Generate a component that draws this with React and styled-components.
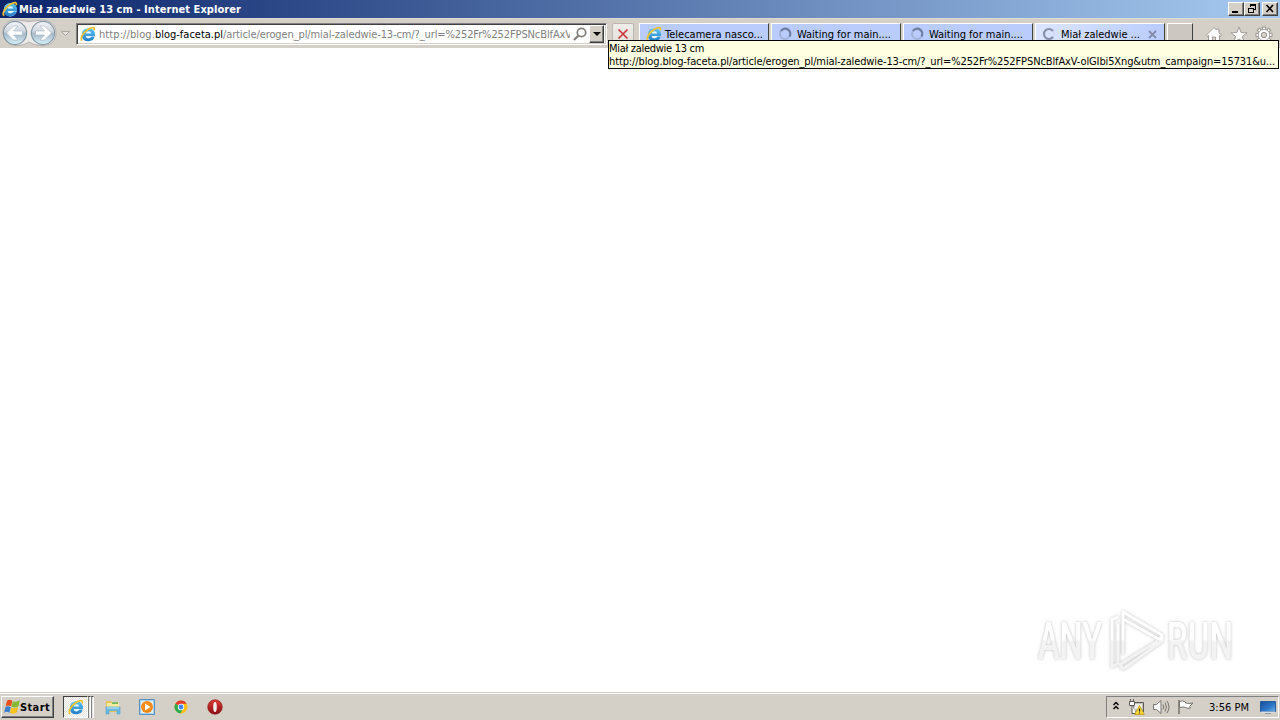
import React, { useLayoutEffect, useRef } from "react";
import styled, { createGlobalStyle, css } from "styled-components";

const Global = createGlobalStyle`
  * { box-sizing: border-box; }
  body { margin: 0; background: #fff; overflow: hidden; }
`;

const Desktop = styled.div`
  width: 1280px;
  height: 720px;
  display: flex;
  flex-direction: column;
  background: #fff;
  color: #000;
  font: 11px/13px "DejaVu Sans Condensed", "DejaVu Sans", sans-serif;
  position: relative;
  overflow: hidden;
  cursor: default;
`;

const Label = styled.span`
  display: inline-block;
  white-space: pre;
  flex: none;
  color: ${(p) => p.$color || "inherit"};
  font-weight: ${(p) => (p.$bold ? 700 : 400)};
`;

/* Tracks the glyphs so that the label takes exactly the given width. */
function Text({ width, color, bold, children }) {
  const ref = useRef(null);
  useLayoutEffect(() => {
    const el = ref.current;
    el.style.letterSpacing = "0px";
    const natural = el.getBoundingClientRect().width;
    el.style.letterSpacing = `${(width - natural) / el.textContent.length}px`;
  }, [width, children]);
  return (
    <Label ref={ref} $color={color} $bold={bold}>
      {children}
    </Label>
  );
}

const TitleBar = styled.header`
  height: 18px;
  flex: none;
  display: flex;
  align-items: center;
  padding: 0 2px 0 2px;
  gap: 1px;
  color: #fff;
  background: linear-gradient(90deg, #0a246a, #a6caf0);
`;

const WindowButtons = styled.div`
  display: flex;
  margin-left: auto;
`;

const raised = css`
  background: #d4d0c8;
  border: 1px solid;
  border-color: #fff #404040 #404040 #fff;
  box-shadow: inset -1px -1px #808080;
`;

const WindowButton = styled.span`
  ${raised}
  width: 16px;
  height: 14px;
  display: flex;
  margin-left: ${(p) => (p.$apart ? "2px" : 0)};
  svg { display: block; }
`;

const ToolBar = styled.nav`
  height: 30px;
  flex: none;
  display: flex;
  align-items: flex-start;
  background: #d4d0c8;
  border-top: 1px solid #dedad4;
`;

const NavButtons = styled.div`
  width: 76px;
  height: 28px;
  svg { display: block; }
`;

const AddressBar = styled.div`
  width: 531px;
  height: 22px;
  margin-top: 4px;
  display: flex;
  align-items: center;
  background: #fff;
  border: 1px solid;
  border-color: #808080 #fff #fff #808080;
  box-shadow: inset 1px 1px #404040, inset -1px -1px #d4d0c8;
  padding: 0 2px 1px 3px;
`;

const UrlText = styled.div`
  width: 472px;
  margin-left: 3px;
  padding-top: 1px;
  display: flex;
  overflow: hidden;
`;

const SearchSlot = styled.span`
  width: 19px;
  display: flex;
  justify-content: center;
`;

const DropButton = styled.span`
  ${raised}
  width: 15px;
  height: 18px;
  margin-top: 1px;
  display: flex;
  align-items: center;
  justify-content: center;
`;

const StopButton = styled.span`
  width: 22px;
  height: 22px;
  margin: 4px 5px 0 5px;
  border: 1px solid #bcb8b1;
  border-radius: 2px;
  background: linear-gradient(#f0edeb, #e2deda);
  display: flex;
  align-items: center;
  justify-content: center;
`;

const Tabs = styled.div`
  display: flex;
  gap: 2px;
  margin-top: 4px;
`;

const Tab = styled.div`
  width: 130px;
  height: 23px;
  display: flex;
  align-items: center;
  padding: 0 0 2px 6px;
  background: ${(p) => (p.$active ? "linear-gradient(90deg, #dbe5ff, #b9ccfb)" : "#b9ccfb")};
  border: 1px solid #fff;
  border-right: 1px solid #404040;
  border-bottom: 0;
  svg { flex: none; }
`;

const TabText = styled.span`
  margin-left: ${(p) => p.$gap}px;
  margin-right: 8px;
  padding-top: 1px;
`;

const NewTab = styled.div`
  width: 26px;
  height: 23px;
  background: #ccc8c1;
  border-top: 1px solid #fff;
  border-left: 1px solid #fff;
  border-right: 1px solid #404040;
`;

const Commands = styled.div`
  display: flex;
  gap: 7px;
  margin: 7px 7px 0 auto;
`;

const Tooltip = styled.div`
  position: absolute;
  left: 608px;
  top: 40px;
  width: 671px;
  height: 29px;
  padding: 1px 0 0;
  background: #ffffe1;
  border: 1px solid #000;
  display: flex;
  flex-direction: column;
  align-items: flex-start;
`;

const Page = styled.main`
  flex: 1;
`;

const Watermark = styled.svg`
  position: absolute;
  left: 1025px;
  top: 600px;
  filter: drop-shadow(0 0 1.5px rgba(0, 0, 0, 0.25));
`;

const TaskBar = styled.footer`
  height: 28px;
  flex: none;
  display: flex;
  align-items: center;
  background: #d4d0c8;
  border-top: 1px solid #d4d0c8;
  box-shadow: inset 0 1px #fff;
  padding: 1px 0 0 1px;
`;

const StartButton = styled.div`
  ${raised}
  width: 53px;
  height: 22px;
  display: flex;
  align-items: center;
  padding-left: 2px;
`;

const pressedPattern = "repeating-conic-gradient(#fff 0 25%, #e6e3de 0 50%) 0 0 / 2px 2px";

const RunningApp = styled.div`
  width: 25px;
  height: 22px;
  margin-left: 9px;
  display: flex;
  align-items: center;
  justify-content: center;
  background: ${pressedPattern};
  border: 1px solid;
  border-color: #404040 #fff #fff #404040;
`;

const StackEdge = styled.div`
  width: 3px;
  height: 22px;
  border-top: 1px solid #404040;
  border-left: 1px solid #808080;
  border-right: 1px solid #fff;
  background: #e8e5e0;
`;

const Pinned = styled.div`
  display: flex;
  gap: 18px;
  margin-left: 11px;
  align-items: center;
`;

const Tray = styled.div`
  width: 173px;
  height: 22px;
  margin-left: auto;
  margin-right: 1px;
  display: flex;
  align-items: center;
  border: 1px solid;
  border-color: #808080 #fff #fff #808080;
  padding-left: 5px;
`;

const TrayIcons = styled.div`
  display: flex;
  align-items: center;
  gap: 8px;
  margin-right: 14px;
`;

const ShowDesktop = styled.div`
  margin-left: 11px;
  display: flex;
`;

function IeIcon({ size = 16, id }) {
  return (
    <svg width={size} height={size} viewBox="0 0 16 16">
      <defs>
        <linearGradient id={id} x2="0" y2="1">
          <stop stopColor="#62c6f5" />
          <stop offset="1" stopColor="#1f7cc8" />
        </linearGradient>
      </defs>
      <circle cx="8.300" cy="8.800" r="6.600" fill="#e8f6fd" />
      <path
        d="M14.700 10.600H11.500Q10.700 12.400 8.500 12.400 5.900 12.400 5.600 9.900H14.900Q15.400 2.300 8.500 2.300 1.900 2.500 1.900 8.900 2 15.200 8.400 15.200 13.500 15.200 14.700 10.600zM5.700 7.500Q6.200 5.200 8.500 5.200 10.900 5.200 11.200 7.500z"
        fill={`url(#${id})`}
      />
      <path d="M2.200 14.600C-.7 13.300 3.100 6.600 8 3.500c3.900-2.600 7.400-2.900 6.200.8" fill="none" stroke="#f3c22f" strokeWidth="1.700" />
    </svg>
  );
}

function Arrows() {
  return (
    <svg width="76" height="28" viewBox="0 19 76 28">
      <defs>
        <linearGradient id="glass" x2="0" y2="1">
          <stop stopColor="#f4f5f8" />
          <stop offset=".4" stopColor="#d3d9e2" />
          <stop offset=".54" stopColor="#a6bac9" />
          <stop offset="1" stopColor="#d8f3fb" />
        </linearGradient>
      </defs>
      <path d="M3 33C2 23 11 19 17 20q12 3 25 0c8 0 14 5 14 13 0 16-19 14-27 9C20 48 4 47 3 33z" fill="#ecebe9" stroke="#b3b0ad" />
      {[15, 43].map((cx) => (
        <circle key={cx} cx={cx} cy="33" r="11.600" fill="url(#glass)" stroke="#8599a6" strokeWidth="1.100" />
      ))}
      <path d="M6.500 33l7-7h4.500l-4.500 5h9v4h-9l4.500 5h-4.500z" fill="#fff" stroke="#a5b6c4" strokeWidth=".6" />
      <path d="M51.500 33l-7-7H40l4.500 5h-9v4h9L40 40h4.500z" fill="#fff" stroke="#a5b6c4" strokeWidth=".6" />
      <path d="M61.500 31.500h8l-4 4z" fill="#e5e2de" stroke="#aaa6a1" />
    </svg>
  );
}

function Spinner({ active }) {
  return (
    <svg width="14" height="14" viewBox="0 0 14 14">
      <circle cx="7" cy="7" r="5" fill="none" stroke={active ? "#d3dbef" : "#a2b2d8"} strokeWidth="2" />
      <path
        d={active ? "M11 4A5 5 0 1 0 11 10" : "M3 4A5 5 0 0 1 11.500 9.500"}
        fill="none"
        stroke={active ? "#8891a8" : "#6d7ba0"}
        strokeWidth="2.200"
      />
    </svg>
  );
}

const TABS = [
  { text: "Telecamera nasco...", width: 98 },
  { text: "Waiting for main....", width: 94 },
  { text: "Waiting for main....", width: 94 },
  { text: "Miał zaledwie ...", width: 79, active: true },
];

const GEAR_TEETH = [0, 45, 90, 135, 180, 225, 270, 315];

export default function App() {
  return (
    <Desktop>
      <Global />
      <TitleBar>
        <IeIcon id="ieTitle" />
        <Text width={222} bold>Miał zaledwie 13 cm - Internet Explorer</Text>
        <WindowButtons>
          <WindowButton>
            <svg width="14" height="12"><path d="M3 8h6v2H3z" /></svg>
          </WindowButton>
          <WindowButton>
            <svg width="14" height="12" fill="none" stroke="#000" shapeRendering="crispEdges">
              <path d="M5.500 4V1.500h5V6.500H8.500M5 2h6M3.500 5.500h5v4h-5zM3 5h6" />
            </svg>
          </WindowButton>
          <WindowButton $apart>
            <svg width="14" height="12"><path d="M3.500 2l6.500 7M10 2L3.500 9" stroke="#000" strokeWidth="1.600" /></svg>
          </WindowButton>
        </WindowButtons>
      </TitleBar>

      <ToolBar>
        <NavButtons><Arrows /></NavButtons>
        <AddressBar>
          <IeIcon id="ieAddress" />
          <UrlText>
            <Text width={56} color="#808080">http://blog.</Text>
            <Text width={68} color="#000">blog-faceta.pl</Text>
            <Text width={349} color="#808080">/article/erogen_pl/mial-zaledwie-13-cm/?_url=%252Fr%252FPSNcBlfAxV</Text>
          </UrlText>
          <SearchSlot>
            <svg width="14" height="14" viewBox="0 0 14 14" fill="none" stroke="#85817e">
              <circle cx="8.500" cy="5.500" r="4.200" strokeWidth="1.800" />
              <path d="M5.500 8.500L1 13" strokeWidth="2.300" />
            </svg>
          </SearchSlot>
          <DropButton>
            <svg width="8" height="4"><path d="M0 0h8L4 4z" /></svg>
          </DropButton>
        </AddressBar>
        <StopButton>
          <svg width="12" height="12"><path d="M1.500 1.500l9 9M10.500 1.500l-9 9" stroke="#c8373b" strokeWidth="1.700" /></svg>
        </StopButton>
        <Tabs>
          {TABS.map((tab, i) => (
            <Tab key={i} $active={tab.active}>
              {i === 0 ? <IeIcon id="ieTab" /> : <Spinner active={tab.active} />}
              <TabText $gap={i === 0 ? 3 : 5}>
                <Text width={tab.width}>{tab.text}</Text>
              </TabText>
              {tab.active && (
                <svg width="9" height="9"><path d="M1 1l7 7M8 1L1 8" stroke="#838baa" strokeWidth="1.800" /></svg>
              )}
            </Tab>
          ))}
          <NewTab />
        </Tabs>
        <Commands>
          <svg width="18" height="18" viewBox="0 0 18 18">
            <path d="M1 9.500L9 1.500l2.500 2.500V3H14v3.800l3 2.700-1 1-1.500-1V16h-4v-5h-3v5h-4V9.500L2 10.500z" fill="#fff" stroke="#a09b95" />
          </svg>
          <svg width="18" height="18" viewBox="0 0 18 18">
            <path d="M9 1l2.100 5.600 6 .2-4.700 3.700 1.700 5.800L9 13l-5.100 3.300 1.700-5.800L.9 6.800l6-.2z" fill="#fff" stroke="#a09b95" />
          </svg>
          <svg width="18" height="18" viewBox="0 0 18 18">
            {GEAR_TEETH.map((a) => (
              <rect key={a} x="7.400" y="1" width="3.200" height="4" fill="#fff" stroke="#99948e" transform={`rotate(${a} 9 9)`} />
            ))}
            <circle cx="9" cy="9" r="5.700" fill="#fff" stroke="#99948e" strokeWidth=".8" />
            <circle cx="9" cy="9" r="2.700" fill="#d4d0c8" stroke="#99948e" />
          </svg>
        </Commands>
      </ToolBar>

      <Page />

      <TaskBar>
        <StartButton>
          <svg width="16" height="16" viewBox="0 0 16 16">
            <path d="M3 1.800q2.500-1.900 5.300 0L7 7.400q-2.600-1.700-5.400 0z" fill="#e94f1d" />
            <path d="M8.800 2.300q2.700 1.500 7-1L14.400 7.300q-3.300 2.200-6.900.5z" fill="#82b931" />
            <path d="M1.400 8.200q2.600-1.800 5.400 0L5.400 13.700q-2.600-1.700-5.200 0z" fill="#397fd0" />
            <path d="M7.300 8.600q3 1.700 6.900-.5l-1.400 5.500q-3.300 2-6.800.4z" fill="#f9c21c" />
          </svg>
          <Text width={30} bold>Start</Text>
        </StartButton>
        <RunningApp><IeIcon id="ieTask" /></RunningApp>
        <StackEdge />
        <StackEdge />
        <Pinned>
          <svg width="16" height="16" viewBox="0 0 16 16">
            <path d="M1 2h5l1 1.500h7V13H1z" fill="#e7c45b" />
            <path d="M2 4h12v8H2z" fill="#fbeaa0" />
            <path d="M7 3.500h6v1.300H7z" fill="#46b04a" />
            <path d="M1 8h14v7h-3v-3.500H4V15H1z" fill="#6bbce2" stroke="#4b9fc8" strokeWidth=".6" />
            <path d="M2 9h12" stroke="#c7edfb" />
          </svg>
          <svg width="16" height="16" viewBox="0 0 16 16">
            <path d="M.5.500h15v15H.5z" fill="#a9d0ee" stroke="#5493c4" />
            <path d="M2 2h12v12H2z" fill="#e4f1f9" />
            <circle cx="8" cy="8" r="6" fill="#f68b19" />
            <path d="M6 4.500v7L11.500 8z" fill="#fff" />
          </svg>
          <svg width="16" height="16" viewBox="0 0 16 16">
            <circle cx="8" cy="8" r="6.500" fill="#fbc116" />
            <path d="M8 8L2.400 4.700A6.500 6.500 0 0 1 13.700 4.800H8z" fill="#e33b2e" />
            <path d="M8 8L2.400 4.700a6.500 6.500 0 0 0 4.800 9.750L10.700 9z" fill="#2da94f" />
            <circle cx="8" cy="8" r="3.200" fill="#fff" />
            <circle cx="8" cy="8" r="2.400" fill="#4285f4" />
          </svg>
          <svg width="16" height="16" viewBox="0 0 16 16">
            <defs>
              <linearGradient id="opera" x2="0" y2="1">
                <stop stopColor="#dc3a35" />
                <stop offset="1" stopColor="#8c0c11" />
              </linearGradient>
            </defs>
            <circle cx="8" cy="8" r="7.300" fill="url(#opera)" stroke="#84191b" strokeWidth=".6" />
            <ellipse cx="8" cy="8" rx="1.800" ry="5" fill="#f6eeee" />
          </svg>
        </Pinned>
        <Tray>
          <TrayIcons>
            <svg width="8" height="12" fill="none" stroke="#000" strokeWidth="1.400">
              <path d="M1.500 4l2.500-2.500L6.500 4M1.500 8L4 5.500 6.500 8" />
            </svg>
            <svg width="17" height="16" viewBox="0 0 17 16">
              <path d="M5 3.500h10.500v9.500H5z" fill="#c2c0bd" stroke="#5e5b57" />
              <path d="M6.500 5h7.500v5H6.500z" fill="#eee" />
              <path d="M1.500 2.500h5v4h-5zM4 6.500v8h4" fill="#fff" stroke="#5e5b57" />
              <path d="M2.500 0v2.500M5.500 0v2.500" stroke="#5e5b57" />
              <path d="M11.500 6.500l4.800 9H6.700z" fill="#ffd83b" stroke="#b69500" strokeWidth=".7" />
              <path d="M11.500 9.500v3M11.500 13.500v1" stroke="#222" strokeWidth="1.200" />
            </svg>
            <svg width="17" height="16" viewBox="0 0 17 16" fill="none" stroke="#77736e">
              <path d="M.5 5.500H3.500L8 1.500v13l-4.500-4H.5z" fill="#f8f8f8" />
              <path d="M10 5.500q1.500 2.500 0 5M12 3.500q3 4.500 0 9M14 2q4 6 0 12" />
            </svg>
            <svg width="17" height="16" viewBox="0 0 17 16">
              <path d="M1.500 2.500q3-1.500 6 .5v1q3 1 7.500 0l-3.500 3.500 1 1.500q-2.500 1-5-.5V8.500q-2-1-6 0z" fill="#fff" stroke="#77736e" />
              <path d="M1 1v14" stroke="#77736e" strokeWidth="1.500" />
            </svg>
          </TrayIcons>
          <Text width={40}>3:56 PM</Text>
          <ShowDesktop>
            <svg width="16" height="13" viewBox="0 0 16 13">
              <defs>
                <linearGradient id="screen" x2="1" y2="1">
                  <stop stopColor="#174d9c" />
                  <stop offset=".6" stopColor="#2e79c9" />
                  <stop offset="1" stopColor="#6fb2eb" />
                </linearGradient>
              </defs>
              <path d="M.5.500h15v10H.5z" fill="url(#screen)" stroke="#285a98" />
              <path d="M1 11h14" stroke="#dcecf7" />
              <path d="M5 12.500h6" stroke="#8c9dac" />
            </svg>
          </ShowDesktop>
        </Tray>
      </TaskBar>

      <Tooltip>
        <Text width={95}>Miał zaledwie 13 cm</Text>
        <Text width={666}>
          {"http://blog.blog-faceta.pl/article/erogen_pl/mial-zaledwie-13-cm/?_url=%252Fr%252FPSNcBlfAxV-olGIbi5Xng&utm_campaign=15731&u..."}
        </Text>
      </Tooltip>

      <Watermark width="225" height="80" viewBox="1025 600 225 80">
        <defs>
          <linearGradient id="mark" gradientUnits="userSpaceOnUse" x1="0" y1="612" x2="0" y2="670">
            <stop offset=".47" stopColor="#fff" />
            <stop offset=".51" stopColor="#f3f3f3" />
          </linearGradient>
        </defs>
        <g fill="url(#mark)" fontFamily="Roboto, sans-serif" fontSize="51" fontWeight="500">
          <text x="1038" y="659" textLength="64" lengthAdjust="spacingAndGlyphs">ANY</text>
          <text x="1167" y="659" textLength="66" lengthAdjust="spacingAndGlyphs">RUN</text>
        </g>
        <g fill="none" stroke="url(#mark)" strokeWidth="3" strokeLinejoin="round">
          <path d="M1118 617l-6 2.500v47l6-3v-40" />
          <path d="M1123 654V612l39 23-2.500 4.500-35.500-20" />
          <path d="M1162 636v5l-39 28-3-4.500 38-23.500" />
        </g>
      </Watermark>
    </Desktop>
  );
}
